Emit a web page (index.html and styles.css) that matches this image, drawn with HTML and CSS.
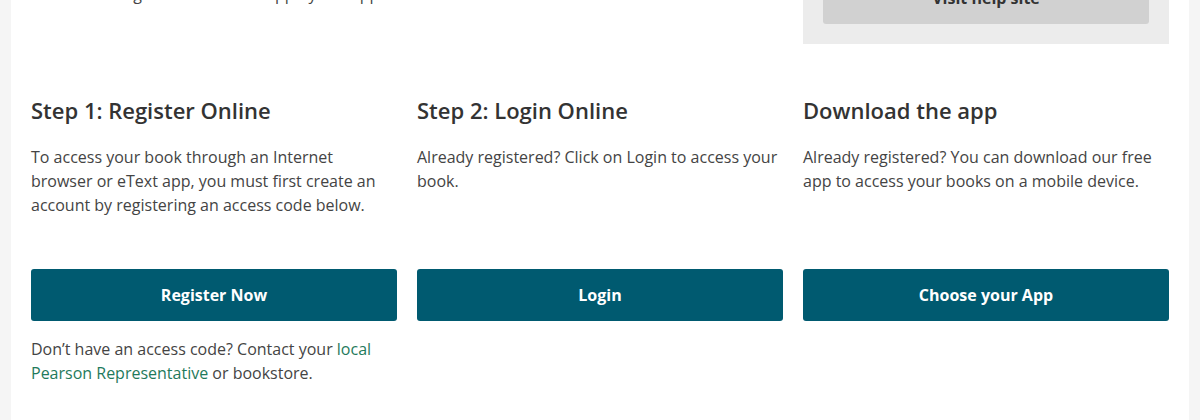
FILE: index.html
```html
<!DOCTYPE html>
<html lang="en">
<head>
<meta charset="utf-8">
<title>Get started</title>
<link rel="stylesheet" href="styles.css">
</head>
<body>
<main class="page">
  <section class="top-row">
    <p class="intro">Learn how to get around in the app by our app.</p>
    <div class="spacer"></div>
    <div class="help-box">
      <a class="help-btn" href="#">Visit help site</a>
    </div>
  </section>
  <section class="steps">
    <h2 class="step-title">Step 1: Register Online</h2>
    <h2 class="step-title">Step 2: Login Online</h2>
    <h2 class="step-title">Download the app</h2>

    <p class="step-text">To access your book through an Internet browser or eText app, you must first create an account by registering an access code below.</p>
    <p class="step-text">Already registered? Click on Login to access your book.</p>
    <p class="step-text">Already registered? You can download our free app to access your books on a mobile device.</p>

    <a class="btn" href="#">Register Now</a>
    <a class="btn" href="#">Login</a>
    <a class="btn" href="#">Choose your App</a>

    <p class="note">Don’t have an access code? Contact your <a href="#" class="link">local Pearson Representative</a> or bookstore.</p>
  </section>
</main>
</body>
</html>
```

FILE: styles.css
```css
html, body {
  margin: 0;
  padding: 0;
}
body {
  background: #f5f5f5;
  font-family: "Open Sans", "Liberation Sans", sans-serif;
  color: #444;
  height: 420px;
  overflow: hidden;
}
.page {
  width: 1178px;
  margin: 0 auto;
  background: #fff;
  min-height: 420px;
  padding: 0 20px;
  box-sizing: border-box;
  overflow: hidden;
}
.top-row {
  display: grid;
  grid-template-columns: 366px 366px 366px;
  column-gap: 20px;
  margin-top: -48px;
  align-items: start;
}
.intro {
  margin: 30px 0 0;
  font-size: 16px;
  line-height: 24px;
  color: #444;
  white-space: nowrap;
}
.help-box {
  background: #ececec;
  padding: 20px;
}
.help-btn {
  display: flex;
  align-items: center;
  justify-content: center;
  height: 52px;
  background: #d1d1d1;
  border-radius: 3px;
  color: #333;
  font-weight: 700;
  font-size: 16px;
  text-decoration: none;
}
.steps {
  display: grid;
  grid-template-columns: 366px 366px 366px;
  column-gap: 20px;
  margin-top: 51px;
}
.step-title {
  margin: 0 0 20px;
  font-size: 22px;
  line-height: 30px;
  font-weight: 600;
  color: #333;
}
.step-text {
  margin: 0 0 52px;
  font-size: 16px;
  line-height: 24px;
  color: #444;
}
.btn {
  display: flex;
  align-items: center;
  justify-content: center;
  height: 52px;
  background: #005a70;
  border-radius: 3px;
  color: #fff;
  font-weight: 700;
  font-size: 16px;
  text-decoration: none;
}
.note {
  margin: 16px 0 0;
  font-size: 16px;
  line-height: 24px;
  color: #444;
}
.link {
  color: #1f7a5c;
  text-decoration: none;
}
```
